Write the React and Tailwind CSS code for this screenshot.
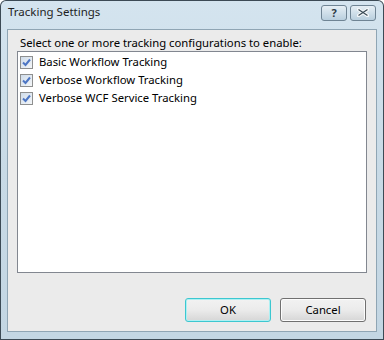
export default function App() {
  const items = ['Basic Workflow Tracking', 'Verbose Workflow Tracking', 'Verbose WCF Service Tracking']
  return (
    <div className="w-[384px] h-[340px] bg-[#3c4a55] rounded-t-[6px] p-px" style={{ fontFamily: '"Noto Sans", "Open Sans", sans-serif' }}>
      <div className="w-full h-full rounded-t-[5px] bg-gradient-to-b from-[#d4e4ef] via-[#c8dae6] to-[#c3d6e3] flex flex-col px-[6px] pb-[7px]">
        <div className="h-[28px] flex items-center justify-between pl-[1px]">
          <span className="text-[11.5px] text-[#1e1e1e] -mt-[6px]">Tracking Settings</span>
          <div className="flex gap-[3px] -mt-[5px] mr-[1px]">
            <div className="w-[26px] h-[16px] rounded-[3px] border border-[#6f8494] bg-gradient-to-b from-[#e6eff5] to-[#b9cfde] flex items-center justify-center text-[11px] font-bold text-[#2c3a44] leading-none">?</div>
            <div className="w-[26px] h-[16px] rounded-[3px] border border-[#6f8494] bg-gradient-to-b from-[#e6eff5] to-[#b9cfde] flex items-center justify-center">
              <svg width="12" height="9" viewBox="0 0 12 9">
                <path d="M1.5 1.5 L10.5 7.5 M10.5 1.5 L1.5 7.5" stroke="#f4f7f9" strokeWidth="3.4" strokeLinecap="square" />
                <path d="M1.5 1.5 L10.5 7.5 M10.5 1.5 L1.5 7.5" stroke="#3a4a55" strokeWidth="1.2" />
              </svg>
            </div>
          </div>
        </div>
        <div className="flex-1 border border-[#8fa5b4] bg-[#ebebeb] flex flex-col px-[9px] pt-[5px] pb-[9px]">
          <p className="text-[11.3px] text-black leading-[15px] pl-[3px]">Select one or more tracking configurations to enable:</p>
          <div className="mt-[1px] h-[222px] border border-[#828790] bg-white pt-[1px]">
            {items.map(item => (
              <div key={item} className="h-[18px] flex items-center pl-[2px]">
                <div className="w-[13px] h-[13px] border border-[#8e8f8f] bg-gradient-to-br from-[#cfdcea] to-[#f4f6f8] flex items-center justify-center">
                  <svg width="9" height="9" viewBox="0 0 9 9">
                    <path d="M1 4.5 L3.5 7 L8 1.5" fill="none" stroke="#4d76c4" strokeWidth="2" />
                  </svg>
                </div>
                <span className="ml-[6px] text-[11.3px] text-black">{item}</span>
              </div>
            ))}
          </div>
          <div className="flex-1" />
          <div className="flex justify-end gap-[9px] pr-[1px]">
            <button className="w-[86px] h-[24px] rounded-[3px] border border-[#3cc7d0] bg-gradient-to-b from-[#f2f2f2] via-[#ebebeb] to-[#d6d6d6] text-[11.3px] text-black shadow-[inset_0_0_0_1px_#aef0f3]">OK</button>
            <button className="w-[86px] h-[24px] rounded-[3px] border border-[#707070] bg-gradient-to-b from-[#f2f2f2] via-[#ebebeb] to-[#d6d6d6] text-[11.3px] text-black shadow-[inset_0_0_0_1px_#fcfcfc]">Cancel</button>
          </div>
        </div>
      </div>
    </div>
  )
}
